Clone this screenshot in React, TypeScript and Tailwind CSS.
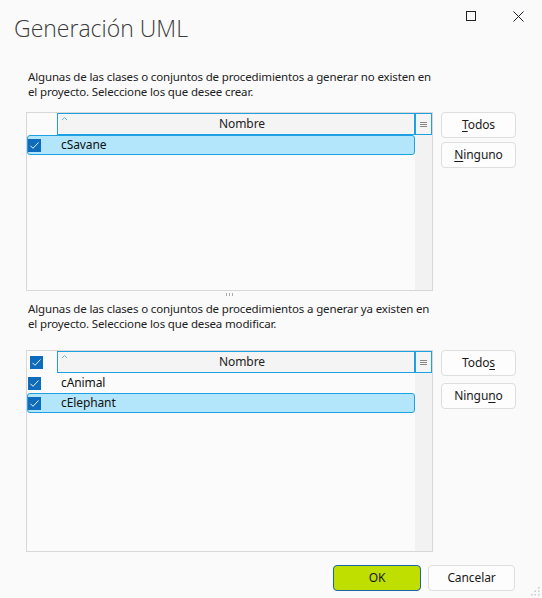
import React from "react";

const FONT = { fontFamily: '"Noto Sans", "Open Sans", sans-serif' };

function Check({ className = "" }: { className?: string }) {
  return (
    <div className={"w-[13px] h-[13px] bg-[#0f6cbd] flex items-center justify-center " + className}>
      <svg width="11" height="11" viewBox="0 0 11 11">
        <polyline points="1.5,5.8 4,8.3 9.5,2.5" fill="none" stroke="#ffffff" strokeWidth="0.9" />
      </svg>
    </div>
  );
}

function Header({ withCheck }: { withCheck: boolean }) {
  return (
    <div className="flex h-[22px] shrink-0">
      <div className="w-[30px] flex items-center pl-[3px]">{withCheck && <Check />}</div>
      <div className="w-[358px] border border-[#1ea1e3] bg-[#f4f4f4] relative flex items-center justify-center text-[12px] tracking-[-0.1px] text-[#222]">
        <svg className="absolute left-[3px] top-[2px]" width="7" height="5" viewBox="0 0 7 5">
          <polyline points="1,4 3.5,1.5 6,4" fill="none" stroke="#5eb6e6" strokeWidth="1" />
        </svg>
        <span className="ml-[12px]">Nombre</span>
      </div>
      <div className="w-[17px] border border-[#1ea1e3] bg-[#f4f4f4] flex items-center justify-center">
        <svg width="7" height="7" viewBox="0 0 7 7">
          <line x1="0" y1="1.5" x2="7" y2="1.5" stroke="#888" strokeWidth="1" />
          <line x1="0" y1="3.5" x2="7" y2="3.5" stroke="#888" strokeWidth="1" />
          <line x1="0" y1="5.5" x2="7" y2="5.5" stroke="#888" strokeWidth="1" />
        </svg>
      </div>
    </div>
  );
}

function Row({ name, selected }: { name: string; selected?: boolean }) {
  return (
    <div
      className={
        "h-[20px] flex items-center border rounded-[3px] " +
        (selected ? "bg-[#b3e6fa] border-[#1ea1e3]" : "border-transparent")
      }
    >
      <Check className="ml-[0px]" />
      <span className="ml-[20px] text-[12px] tracking-[-0.1px] text-[#111]">{name}</span>
    </div>
  );
}

function Grid({ withCheck, rows, heightClass }: { withCheck: boolean; rows: { name: string; selected?: boolean }[]; heightClass: string }) {
  return (
    <div className={"w-[407px] border border-[#d8d8d8] bg-[#fbfbfb] flex flex-col " + heightClass}>
      <Header withCheck={withCheck} />
      <div className="flex flex-1">
        <div className="w-[388px] flex flex-col">
          {rows.map((r) => (
            <Row key={r.name} name={r.name} selected={r.selected} />
          ))}
        </div>
        <div className="w-[17px] bg-[#f2f2f2]" />
      </div>
    </div>
  );
}

function Btn({ children, className = "" }: { children: React.ReactNode; className?: string }) {
  return (
    <div
      className={
        "h-[26px] rounded-[4px] border flex items-center justify-center text-[12px] tracking-[-0.1px] text-[#1a1a1a] " +
        className
      }
    >
      {children}
    </div>
  );
}

export default function App() {
  return (
    <div className="relative w-[542px] h-[598px] bg-[#fafafa] flex flex-col overflow-hidden" style={FONT}>
      {/* title bar */}
      <div className="flex justify-between items-start h-[69px] shrink-0">
        <div
          className="pl-[14px] pt-[17px] text-[23px] leading-[23px] font-light text-[#3b3b3b]"
          style={{ fontFamily: '"Open Sans", "Noto Sans", sans-serif' }}
        >
          Generación UML
        </div>
        <div className="flex gap-[37px] pt-[11px] pr-[18px]">
          <svg width="10" height="10" viewBox="0 0 10 10">
            <rect x="0.5" y="0.5" width="9" height="9" fill="none" stroke="#222" strokeWidth="1" />
          </svg>
          <svg width="11" height="11" viewBox="0 0 11 11">
            <line x1="0.5" y1="0.5" x2="10.5" y2="10.5" stroke="#222" strokeWidth="1" />
            <line x1="10.5" y1="0.5" x2="0.5" y2="10.5" stroke="#222" strokeWidth="1" />
          </svg>
        </div>
      </div>

      {/* paragraph 1 */}
      <p className="pl-[28px] text-[11.5px] tracking-[-0.15px] leading-[15px] text-[#222]">
        Algunas de las clases o conjuntos de procedimientos a generar no existen en
        <br />
        el proyecto. Seleccione los que desee crear.
      </p>

      {/* grid 1 */}
      <div className="flex gap-[8px] pl-[26px] mt-[13px]">
        <Grid withCheck={false} rows={[{ name: "cSavane", selected: true }]} heightClass="h-[179px]" />
        <div className="flex flex-col gap-[4px] w-[75px]">
          <Btn className="bg-[#fdfdfd] border-[#dedede]">
            <span>
              <u className="underline-offset-2">T</u>odos
            </span>
          </Btn>
          <Btn className="bg-[#fdfdfd] border-[#dedede]">
            <span>
              <u className="underline-offset-2">N</u>inguno
            </span>
          </Btn>
        </div>
      </div>

      {/* splitter grip */}
      <div className="h-[10px] flex justify-center pl-[26px] w-[433px] shrink-0">
        <svg className="mt-[2px]" width="8" height="3" viewBox="0 0 8 3">
          <rect x="0" y="0" width="1" height="3" fill="#aaa" />
          <rect x="3" y="0" width="1" height="3" fill="#aaa" />
          <rect x="6" y="0" width="1" height="3" fill="#aaa" />
        </svg>
      </div>

      {/* paragraph 2 */}
      <p className="pl-[28px] text-[11.5px] tracking-[-0.15px] leading-[15px] text-[#222]">
        Algunas de las clases o conjuntos de procedimientos a generar ya existen en
        <br />
        el proyecto. Seleccione los que desea modificar.
      </p>

      {/* grid 2 */}
      <div className="flex gap-[8px] pl-[26px] mt-[19px]">
        <Grid
          withCheck={true}
          rows={[{ name: "cAnimal" }, { name: "cElephant", selected: true }]}
          heightClass="h-[202px]"
        />
        <div className="flex flex-col gap-[7px] w-[75px]">
          <Btn className="bg-[#fdfdfd] border-[#dedede]">
            <span>
              Todo<u className="underline-offset-2">s</u>
            </span>
          </Btn>
          <Btn className="bg-[#fdfdfd] border-[#dedede]">
            <span>
              Ningu<u className="underline-offset-2">n</u>o
            </span>
          </Btn>
        </div>
      </div>

      {/* bottom buttons */}
      <div className="flex justify-end gap-[7px] pr-[27px] mt-[13px]">
        <Btn className="w-[88px] bg-[#bedf00] border-[#1b64a8]">OK</Btn>
        <Btn className="w-[87px] bg-[#fdfdfd] border-[#dedede]">Cancelar</Btn>
      </div>

      {/* resize grip */}
      <svg className="absolute right-[2px] bottom-[2px]" width="10" height="10" viewBox="0 0 10 10">
        <rect x="8" y="1" width="1.5" height="1.5" fill="#c8c8c8" />
        <rect x="4.5" y="4.5" width="1.5" height="1.5" fill="#c8c8c8" />
        <rect x="8" y="4.5" width="1.5" height="1.5" fill="#c8c8c8" />
        <rect x="1" y="8" width="1.5" height="1.5" fill="#c8c8c8" />
        <rect x="4.5" y="8" width="1.5" height="1.5" fill="#c8c8c8" />
        <rect x="8" y="8" width="1.5" height="1.5" fill="#c8c8c8" />
      </svg>
    </div>
  );
}
